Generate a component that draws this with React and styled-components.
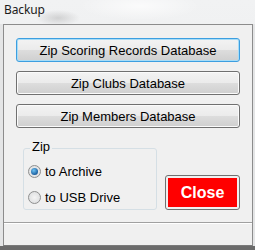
import React from "react";
import styled, { createGlobalStyle } from "styled-components";

const Global = createGlobalStyle`
  html, body { margin: 0; padding: 0; background: #e9eaeb; }
  #root { width: 255px; height: 250px; overflow: hidden; }
`;

const Window = styled.div`
  width: 255px;
  height: 250px;
  display: flex;
  flex-direction: column;
  background:
    radial-gradient(ellipse 22px 8px at 58px 18px, rgba(150,150,150,0.35), rgba(150,150,150,0) 100%),
    radial-gradient(ellipse 60px 14px at 140px 6px, rgba(255,255,255,0.7), rgba(255,255,255,0) 100%),
    linear-gradient(#f1f2f3, #e7e8e9);
`;

const TitleBar = styled.div`
  height: 24px;
  flex: none;
  padding-left: 4px;
  box-sizing: border-box;
  font-family: "Noto Sans", "DejaVu Sans", sans-serif;
  font-size: 12px;
  line-height: 20px;
  color: #1b1b1b;
  letter-spacing: -0.1px;
`;

const Frame = styled.div`
  flex: 1;
  display: flex;
  padding: 0 3px 0 3px;
  border-bottom: 4px solid #6b6b6b;
  background: #e4e5e6;
`;

const Client = styled.div`
  flex: 1;
  display: flex;
  flex-direction: column;
  border: 1px solid #8c8c8c;
  border-bottom-color: #7a7a7a;
  background: #f0f0f0;
  font-family: "Liberation Sans", Arial, sans-serif;
  font-size: 13px;
  color: #000;
`;

const Content = styled.div`
  flex: 1;
  display: flex;
  flex-direction: column;
  padding: 13px 12px 0 12px;
  gap: 9px;
`;

const Button = styled.button`
  height: 24px;
  margin: 0;
  padding: 0;
  box-sizing: border-box;
  border-radius: 3px;
  border: 1px solid ${(p) => (p.$focused ? "#3c9ee0" : "#707070")};
  box-shadow: inset 0 0 0 1px ${(p) => (p.$focused ? "#a6dcf7" : "#fbfbfb")};
  background: linear-gradient(#f3f3f3 0%, #ebebeb 50%, #dddddd 51%, #cfcfcf 100%);
  font-family: "Liberation Sans", Arial, sans-serif;
  font-size: 13px;
  color: #000;
  text-align: center;
`;

const BottomRow = styled.div`
  display: flex;
  align-items: flex-end;
  gap: 8px;
  margin-top: 11px;
  padding-left: 7px;
`;

const GroupBox = styled.fieldset`
  margin: 0;
  width: 134px;
  height: 62px;
  box-sizing: border-box;
  border: 1px solid #d5dfe5;
  border-radius: 3px;
  padding: 13px 0 0 4px;
  display: flex;
  flex-direction: column;
  gap: 8px;
  position: relative;
`;

const Legend = styled.legend`
  padding: 0 2px;
  margin-left: 4px;
  font-size: 13px;
  line-height: 12px;
  position: absolute;
  top: -8px;
  left: 2px;
  background: #f0f0f0;
`;

const RadioRow = styled.label`
  display: flex;
  align-items: center;
  gap: 4px;
  height: 18px;
  font-size: 13px;
`;

const RadioCircle = styled.span`
  width: 13px;
  height: 13px;
  box-sizing: border-box;
  border-radius: 50%;
  border: 1px solid #8e8f8f;
  background: radial-gradient(circle at 50% 50%, #f4f4f4, #d9dadb);
  display: flex;
  align-items: center;
  justify-content: center;
  flex: none;
`;

const RadioDot = styled.span`
  width: 7px;
  height: 7px;
  border-radius: 50%;
  background: radial-gradient(circle at 40% 35%, #6fc3f3, #1a5fa0 70%, #174a80);
`;

const CloseButton = styled.button`
  width: 75px;
  height: 35px;
  margin: 0;
  padding: 2px;
  box-sizing: border-box;
  border: 1px solid #707070;
  border-radius: 3px;
  background: #f0f0f0;
  display: flex;
`;

const CloseFace = styled.span`
  flex: 1;
  background: #ff0000;
  color: #fff;
  font-family: "Liberation Sans", Arial, sans-serif;
  font-weight: bold;
  font-size: 16px;
  display: flex;
  align-items: center;
  justify-content: center;
`;

const StatusBar = styled.div`
  height: 22px;
  border-top: 1px solid #a0a0a0;
  box-shadow: inset 0 1px 0 #ffffff;
  background: #f0f0f0;
  flex: none;
`;

function Radio({ checked, children }) {
  return (
    <RadioRow>
      <RadioCircle>{checked && <RadioDot />}</RadioCircle>
      {children}
    </RadioRow>
  );
}

export default function App() {
  return (
    <>
      <Global />
      <Window>
        <TitleBar>Backup</TitleBar>
        <Frame>
          <Client>
            <Content>
              <Button $focused>Zip Scoring Records Database</Button>
              <Button>Zip Clubs Database</Button>
              <Button>Zip Members Database</Button>
              <BottomRow>
                <GroupBox>
                  <Legend>Zip</Legend>
                  <Radio checked>to Archive</Radio>
                  <Radio>to USB Drive</Radio>
                </GroupBox>
                <CloseButton>
                  <CloseFace>Close</CloseFace>
                </CloseButton>
              </BottomRow>
            </Content>
            <StatusBar />
          </Client>
        </Frame>
      </Window>
    </>
  );
}
